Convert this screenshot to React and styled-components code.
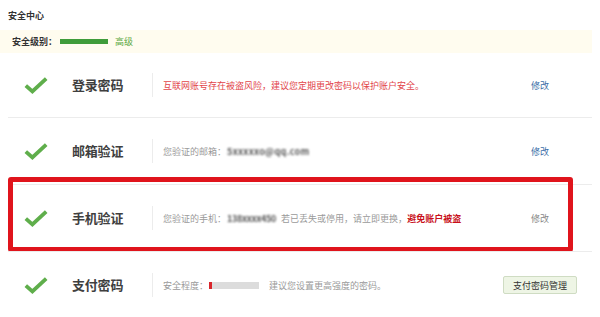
import React from "react";
import styled, { createGlobalStyle } from "styled-components";

const Global = createGlobalStyle`
  html, body { margin: 0; padding: 0; background: #fff; }
  body { font-family: "Microsoft YaHei", "Noto Sans CJK SC", "Noto Sans", sans-serif; }
  * { box-sizing: border-box; }
`;

const Page = styled.div`
  width: 600px;
  padding: 0 8px;
`;

const Header = styled.div`
  height: 30px;
  padding-top: 11px;
  font-size: 9px;
  line-height: 10px;
  font-weight: bold;
  color: #333;
`;

const Banner = styled.div`
  height: 23px;
  margin-left: -8px;
  padding-left: 12px;
  background: #fffcef;
  display: flex;
  align-items: center;
  font-size: 9px;
`;

const LevelLabel = styled.span`
  color: #333;
  font-weight: bold;
`;

const LevelBar = styled.span`
  width: 48px;
  height: 5px;
  background: #3f9c3a;
  margin: 0 7px 0 3px;
`;

const LevelText = styled.span`
  color: #5aa83f;
`;

const Row = styled.div`
  position: relative;
  height: ${(p) => (p.$first ? "64px" : "67px")};
  border-top: ${(p) => (p.$first ? "none" : "1px solid #ececec")};
  display: grid;
  grid-template-columns: 16px 24px 24px 80px 1px 10px 1fr 104px;
  align-items: center;
`;

const Check = styled.svg`
  grid-column: 2;
  width: 24px;
  height: 17px;
  display: block;
`;

const Title = styled.div`
  grid-column: 4;
  font-size: 13px;
  font-weight: bold;
  color: #3f3f3f;
  line-height: 16px;
  letter-spacing: -0.2px;
`;

const Divider = styled.div`
  grid-column: 5;
  width: 1px;
  height: 24px;
  background: #ececec;
`;

const Desc = styled.div`
  grid-column: 7;
  font-size: 9px;
  color: ${(p) => (p.$warn ? "#e2454a" : "#9a9a9a")};
  display: flex;
  align-items: center;
  white-space: nowrap;
`;

const Blurred = styled.span`
  display: inline-block;
  color: #555;
  filter: blur(1px);
  font-weight: bold;
  letter-spacing: ${(p) => p.$ls || 0}px;
  margin: 0 5px 0 1px;
`;

const Strong = styled.span`
  color: #c8101a;
  font-weight: bold;
`;

const Strength = styled.span`
  width: 50px;
  height: 7px;
  background: #dcdcdc;
  border-left: 3px solid #d8262c;
  margin: 0 10px 0 1px;
`;

const Action = styled.div`
  grid-column: 8;
  display: flex;
  justify-content: center;
  font-size: 9px;
`;

const Link = styled.a`
  color: ${(p) => (p.$muted ? "#888" : "#3b6ea8")};
  text-decoration: none;
`;

const Button = styled.button`
  width: 74px;
  height: 18px;
  padding: 0;
  font-family: inherit;
  font-size: 9px;
  color: #333;
  background: #eef5e5;
  border: 1px solid #cfdcc3;
  border-radius: 2px;
`;

const Highlight = styled.div`
  position: absolute;
  left: 0;
  top: -8px;
  right: 19px;
  bottom: -1px;
  border: 5px solid #e0141c;
  border-radius: 3px;
  pointer-events: none;
`;

const CheckIcon = () => (
  <Check viewBox="0 0 24 17">
    <polyline
      points="1.8,8.6 8.4,14.4 22.2,1.6"
      fill="none"
      stroke="#5fae4b"
      strokeWidth="3.8"
    />
  </Check>
);

export default function App() {
  return (
    <Page>
      <Global />
      <Header>安全中心</Header>
      <Banner>
        <LevelLabel>安全级别：</LevelLabel>
        <LevelBar />
        <LevelText>高级</LevelText>
      </Banner>

      <Row $first>
        <CheckIcon />
        <Title>登录密码</Title>
        <Divider />
        <Desc $warn>互联网账号存在被盗风险，建议您定期更改密码以保护账户安全。</Desc>
        <Action>
          <Link href="#">修改</Link>
        </Action>
      </Row>

      <Row>
        <CheckIcon />
        <Title>邮箱验证</Title>
        <Divider />
        <Desc>
          您验证的邮箱：
          <Blurred $ls={0.3}>5xxxxxo@qq.com</Blurred>
        </Desc>
        <Action>
          <Link href="#">修改</Link>
        </Action>
      </Row>

      <Row>
        <CheckIcon />
        <Title>手机验证</Title>
        <Divider />
        <Desc>
          您验证的手机：
          <Blurred $ls={-0.3}>138xxxx450</Blurred>
          若已丢失或停用，请立即更换，<Strong>避免账户被盗</Strong>
        </Desc>
        <Action>
          <Link href="#" $muted>修改</Link>
        </Action>
        <Highlight />
      </Row>

      <Row>
        <CheckIcon />
        <Title>支付密码</Title>
        <Divider />
        <Desc>
          安全程度：
          <Strength />
          建议您设置更高强度的密码。
        </Desc>
        <Action>
          <Button>支付密码管理</Button>
        </Action>
      </Row>
    </Page>
  );
}
